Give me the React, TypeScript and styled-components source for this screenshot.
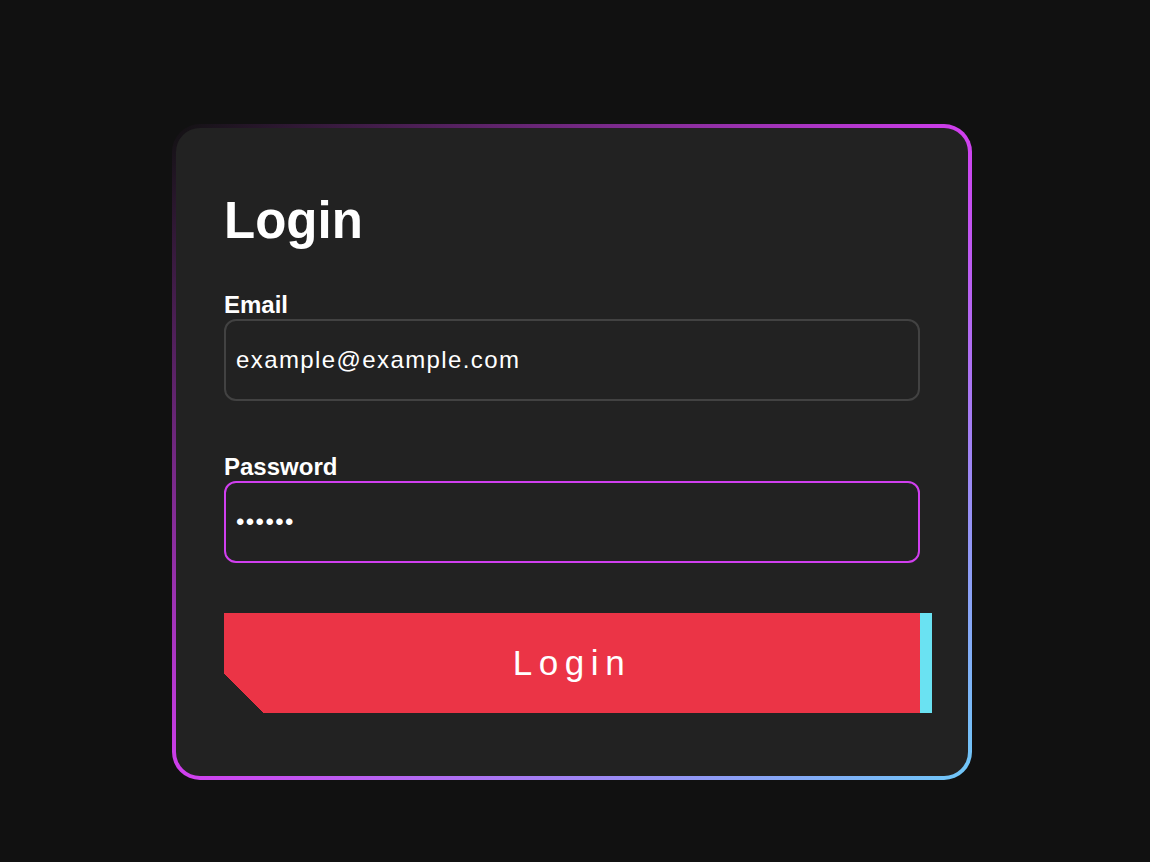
import React from "react";
import styled, { createGlobalStyle } from "styled-components";

const GlobalStyle = createGlobalStyle`
  html, body {
    margin: 0;
    padding: 0;
    background: #111111;
  }
  body {
    font-family: "Liberation Sans", Arial, Helvetica, sans-serif;
    color: #ffffff;
  }
  * { box-sizing: border-box; }
`;

const Page = styled.main`
  min-height: 862px;
  padding: 124px 0 0 172px;
  display: flex;
  align-items: flex-start;
`;

const GradientFrame = styled.div`
  width: 800px;
  padding: 4px;
  border-radius: 28px;
  background: linear-gradient(
    to bottom right,
    rgba(209, 63, 239, 0) 0%,
    #d13fef 50%,
    #6ec8f8 100%
  );
`;

const Card = styled.section`
  background: #222222;
  border-radius: 24px;
  padding: 64px 48px 63px 48px;
  display: flex;
  flex-direction: column;
`;

const Title = styled.h1`
  margin: 0 0 42px 0;
  font-size: 51px;
  line-height: 57px;
  font-weight: 700;
  color: #ffffff;
`;

const Form = styled.form`
  display: flex;
  flex-direction: column;
`;

const Field = styled.div<{ $last?: boolean }>`
  display: flex;
  flex-direction: column;
  margin-bottom: ${(p) => (p.$last ? "50px" : "52px")};
`;

const Label = styled.label`
  display: block;
  font-size: 24px;
  line-height: 27px;
  font-weight: 700;
  margin-bottom: 1px;
  color: #ffffff;
`;

const Input = styled.input<{ $active?: boolean }>`
  width: 100%;
  height: 82px;
  padding: 0 10px;
  border-radius: 12px;
  border: 2px solid ${(p) => (p.$active ? "#d13fef" : "#424242")};
  background: #222222;
  color: #ffffff;
  font-family: "Liberation Sans", Arial, Helvetica, sans-serif;
  font-size: 24px;
  letter-spacing: 1.4px;
  outline: none;
`;

const SubmitButton = styled.button`
  width: 100%;
  height: 100px;
  border: none;
  padding: 0 0 1px 0;
  cursor: pointer;
  color: #ffffff;
  font-family: "Liberation Sans", Arial, Helvetica, sans-serif;
  font-size: 35px;
  font-weight: 400;
  letter-spacing: 6.6px;
  background: linear-gradient(45deg, transparent 28.28px, #eb3446 28.28px);
  box-shadow: 12px 0 0 #6ae2f2;
`;

export default function App() {
  return (
    <>
      <GlobalStyle />
      <Page>
        <GradientFrame>
          <Card>
            <Title>Login</Title>
            <Form onSubmit={(e) => e.preventDefault()}>
              <Field>
                <Label htmlFor="email">Email</Label>
                <Input id="email" type="email" defaultValue="example@example.com" />
              </Field>
              <Field $last>
                <Label htmlFor="password">Password</Label>
                <Input id="password" type="password" defaultValue="123456" $active />
              </Field>
              <SubmitButton type="submit">Login</SubmitButton>
            </Form>
          </Card>
        </GradientFrame>
      </Page>
    </>
  );
}
